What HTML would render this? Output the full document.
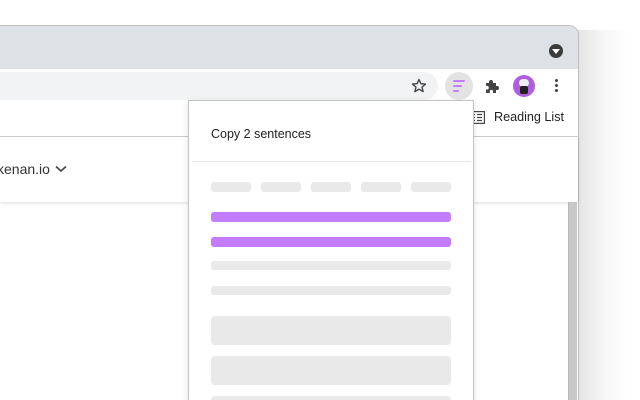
<!DOCTYPE html>
<html><head><style>
*{margin:0;padding:0;box-sizing:border-box}
html,body{width:640px;height:400px;overflow:hidden}
body{background:#fff;font-family:"Liberation Sans",Arial,sans-serif;position:relative}
.abs{position:absolute}
</style></head><body>
<div class="abs" style="left:578px;top:30px;width:62px;height:370px;background:linear-gradient(90deg,#e4e4e4,#f6f6f6 25px,#fff 50px)"></div>
<div class="abs" style="left:-10px;top:25px;width:589px;height:375px;border-top:1px solid #bdbdbd;border-right:1px solid #bdbdbd;border-radius:0 10px 0 0;background:#fff;overflow:hidden">
  <div class="abs" style="left:0;top:0;width:600px;height:43px;background:#dee1e6"></div>
  <div class="abs" style="left:559px;top:18px;width:14px;height:14px;border-radius:50%;background:#3c3c3c"></div>
  <div class="abs" style="left:562px;top:23px;width:0;height:0;border-left:4px solid transparent;border-right:4px solid transparent;border-top:5px solid #fff"></div>
</div>
<!-- toolbar -->
<div class="abs" style="left:0;top:72px;width:438px;height:28px;background:#f1f3f4;border-radius:0 14px 14px 0"></div>
<svg class="abs" style="left:411px;top:78px" width="16" height="16" viewBox="0 0 16 16"><path d="M8 1.5l1.9 4.2 4.6.4-3.5 3 1.1 4.5L8 11.2 3.9 13.6 5 9.1 1.5 6.1l4.6-.4z" fill="none" stroke="#444" stroke-width="1.4" stroke-linejoin="round"/></svg>
<div class="abs" style="left:445px;top:72px;width:28px;height:28px;border-radius:50%;background:#e3e3e3"></div>
<div class="abs" style="left:453px;top:80px;width:12px;height:2px;background:#c27cff;border-radius:1px"></div>
<div class="abs" style="left:453px;top:85px;width:9px;height:2px;background:#c27cff;border-radius:1px"></div>
<div class="abs" style="left:453px;top:90px;width:6px;height:2px;background:#c27cff;border-radius:1px"></div>
<svg class="abs" style="left:484px;top:78px" width="16" height="16" viewBox="0 0 16 16"><path d="M2 5h3V4a2 2 0 014 0v1h3v3h1a2 2 0 010 4h-1v3H9v-1.5a1.6 1.6 0 00-3.2 0V15H2v-3.5h1a1.8 1.8 0 000-3.6H2z" fill="#444"/></svg>
<div class="abs" style="left:513px;top:75px;width:22px;height:22px;border-radius:50%;background:#b05ee0"></div>
<div class="abs" style="left:519px;top:79px;width:10px;height:8px;border-radius:4px;background:#eee"></div>
<div class="abs" style="left:520px;top:86px;width:8px;height:8px;background:#222;border-radius:2px"></div>
<div class="abs" style="left:555px;top:79px;width:3px;height:3px;border-radius:50%;background:#444;box-shadow:0 5px 0 #444,0 10px 0 #444"></div>
<!-- bookmarks -->
<div class="abs" style="left:0;top:136px;width:578px;height:1px;background:#d0d0d0"></div>
<svg class="abs" style="left:471px;top:111px" width="14" height="13" viewBox="0 0 14 13"><rect x="0.6" y="0.6" width="12.8" height="11.8" fill="none" stroke="#444" stroke-width="1.2"/><path d="M3 3.5h1M6 3.5h5M3 6.5h1M6 6.5h5M3 9.5h1M6 9.5h5" stroke="#444" stroke-width="1.2"/></svg>
<div class="abs" style="left:494px;top:110px;font-size:12.6px;color:#222">Reading List</div>
<!-- content header -->
<div class="abs" style="left:0;top:137px;width:578px;height:65px;background:#fff;box-shadow:0 1px 3px rgba(0,0,0,.15)"></div>
<div class="abs" style="left:-3px;top:161px;font-size:14px;color:#333">kenan.io</div>
<svg class="abs" style="left:55px;top:165px" width="12" height="8" viewBox="0 0 12 8"><path d="M1 1.5l5 4.5 5-4.5" fill="none" stroke="#444" stroke-width="1.6"/></svg>
<div class="abs" style="left:568px;top:202px;width:9px;height:198px;background:#c8c8c8;border-left:1px solid #b8b8b8"></div>
<!-- popup -->
<div class="abs" style="left:188px;top:100px;width:286px;height:300px;background:#fff;border:1px solid #c4c4c4;border-bottom:none;box-shadow:0 2px 6px rgba(0,0,0,.12);overflow:hidden">
  <div class="abs" style="left:22px;top:26px;font-size:12.5px;color:#222">Copy 2 sentences</div>
  <div class="abs" style="left:3px;top:60px;width:279px;height:1px;background:#e8e8e8"></div>
  <div class="abs" style="left:22px;top:81px;width:40px;height:10px;background:#e9e9e9;border-radius:3px"></div>
  <div class="abs" style="left:72px;top:81px;width:40px;height:10px;background:#e9e9e9;border-radius:3px"></div>
  <div class="abs" style="left:122px;top:81px;width:40px;height:10px;background:#e9e9e9;border-radius:3px"></div>
  <div class="abs" style="left:172px;top:81px;width:40px;height:10px;background:#e9e9e9;border-radius:3px"></div>
  <div class="abs" style="left:222px;top:81px;width:40px;height:10px;background:#e9e9e9;border-radius:3px"></div>
  <div class="abs" style="left:22px;top:111px;width:240px;height:10px;background:#c27cfc;border-radius:3px"></div>
  <div class="abs" style="left:22px;top:136px;width:240px;height:10px;background:#c27cfc;border-radius:3px"></div>
  <div class="abs" style="left:22px;top:160px;width:240px;height:9px;background:#e9e9e9;border-radius:3px"></div>
  <div class="abs" style="left:22px;top:185px;width:240px;height:9px;background:#e9e9e9;border-radius:3px"></div>
  <div class="abs" style="left:22px;top:215px;width:240px;height:29px;background:#e9e9e9;border-radius:4px"></div>
  <div class="abs" style="left:22px;top:255px;width:240px;height:29px;background:#e9e9e9;border-radius:4px"></div>
  <div class="abs" style="left:22px;top:295px;width:240px;height:29px;background:#e9e9e9;border-radius:4px"></div>
</div>
</body></html>
